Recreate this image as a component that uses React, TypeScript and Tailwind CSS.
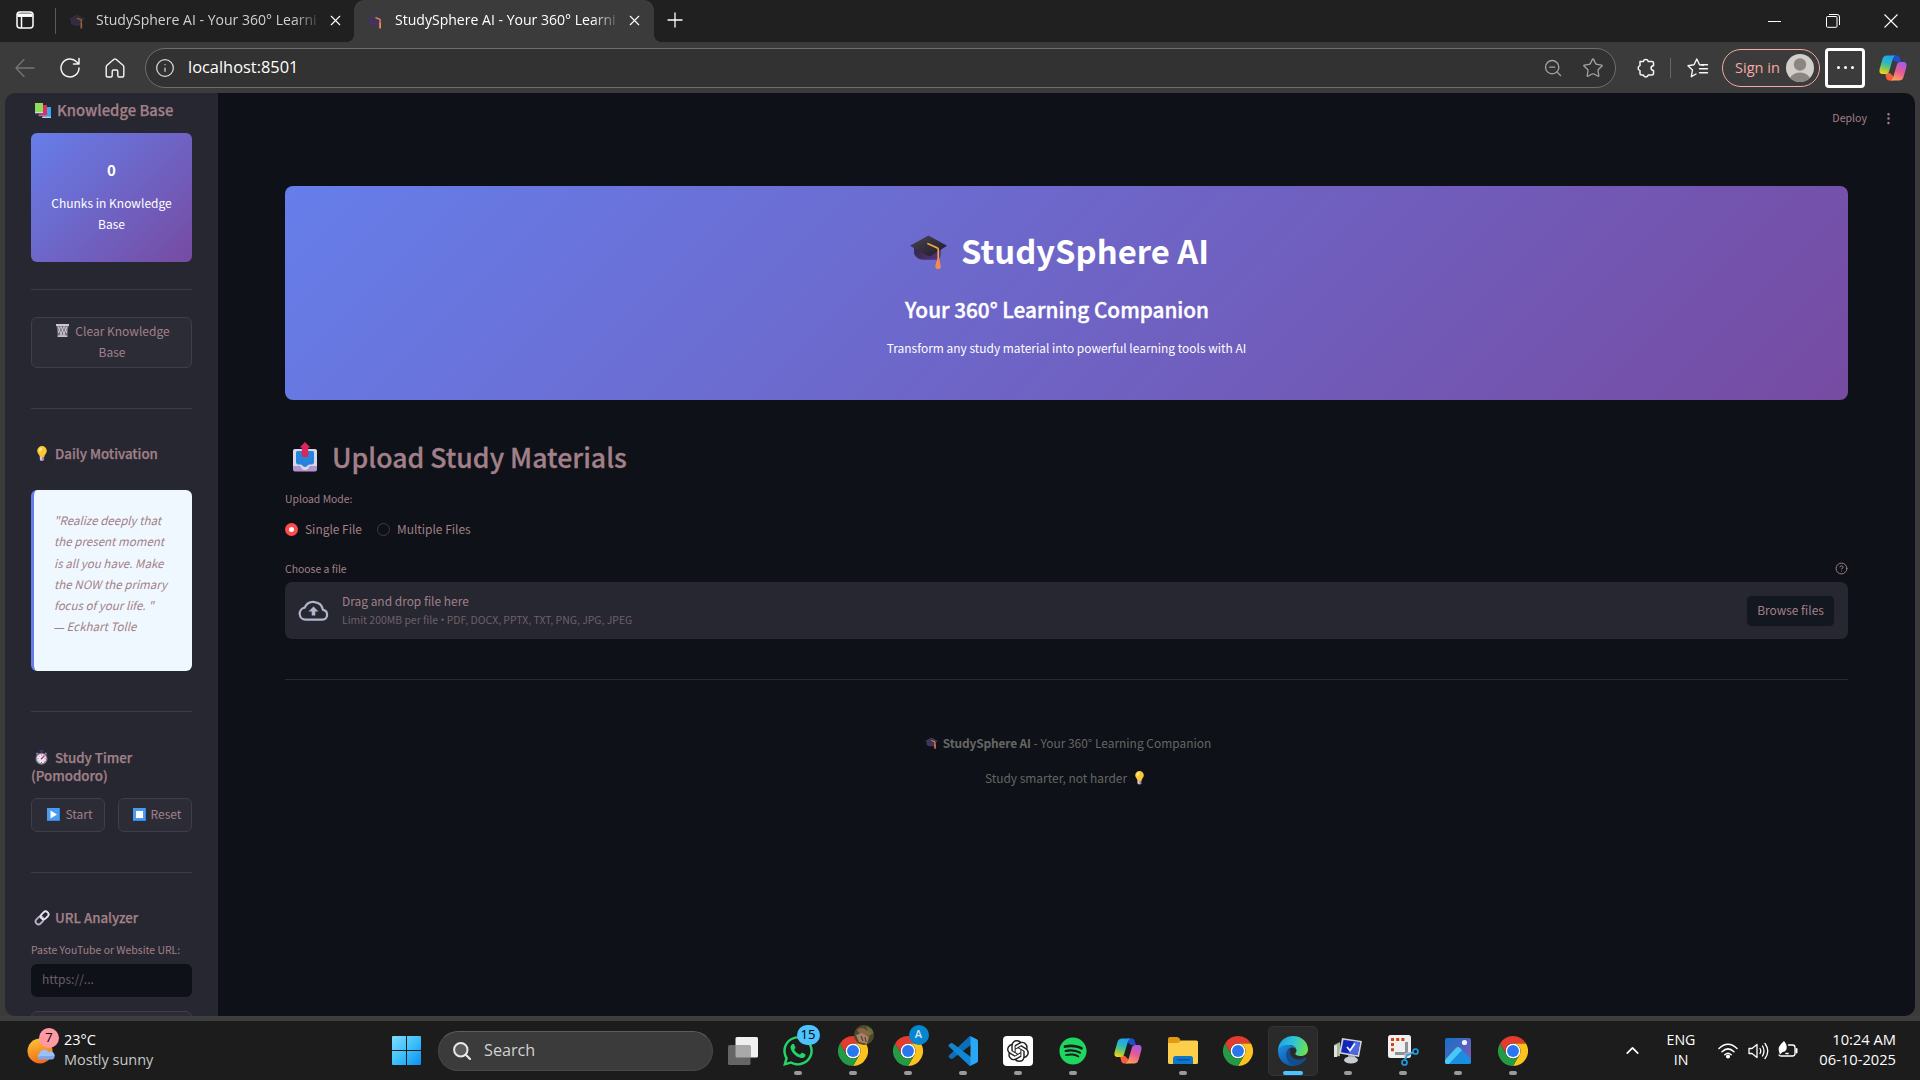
import React from 'react';
import { Info, Star, X, Plus, ZoomOut, MoreVertical, ChevronUp, CircleHelp } from 'lucide-react';
import { FaWhatsapp, FaSpotify } from 'react-icons/fa';
import { SiOpenai } from 'react-icons/si';

type IconProps = { className?: string };

/* ---------- emoji drawings ---------- */

const Cap = ({ className }: IconProps) => (
  <svg viewBox="0 0 36 34" className={className}>
    <defs>
      <linearGradient id="capTop" x1="0" y1="0" x2="1" y2="1">
        <stop offset="0" stopColor="#4a4552" />
        <stop offset="1" stopColor="#1f1a28" />
      </linearGradient>
      <linearGradient id="capBase" x1="0" y1="0" x2="1" y2="0.4">
        <stop offset="0" stopColor="#32273f" />
        <stop offset="1" stopColor="#52307c" />
      </linearGradient>
    </defs>
    <path d="M4 12V18Q6 24 13 24H28Q30 22 30 18V11Z" fill="url(#capBase)" />
    <path d="M18 0.5 36 10.5 21 20Q18.500 21.200 16 19.500L0 10.500Z" fill="url(#capTop)" />
    <path d="M17.500 8.500 26.500 12.500Q27.500 13 27.500 14.500V25" fill="none" stroke="#eda63a" strokeWidth="1.700" strokeLinecap="round" />
    <path d="M26.500 23H28.500L30 31Q29.500 33.500 27.500 33.500T24.500 31Z" fill="#f58a4c" />
  </svg>
);

const SmallCap = ({ className }: IconProps) => (
  <svg viewBox="0 0 16 15" className={className}>
    <path d="M2 5V9.500Q4 11.500 7 11.500H13V5Z" fill="#4b2f6c" />
    <path d="M8 .5 16 5 9.500 9.500H7.500L0 5Z" fill="#413450" />
    <path d="M8 4.300 12.300 6V10" fill="none" stroke="#e09a3c" strokeWidth="1.200" />
    <path d="M11.500 9.500H13.200V14.500H11.500Z" fill="#f58a4c" />
  </svg>
);

const Books = ({ className }: IconProps) => (
  <svg viewBox="0 0 16 15" className={className}>
    <path d="M8 4h8v10.800H8z" fill="#37a8ee" />
    <path d="M7 13.800h9v1H7z" fill="#d9e8f7" />
    <path d="M4 2h8v10H4z" fill="#e62a5c" />
    <path d="M3.500 12h8v1.200h-8z" fill="#b36aa0" />
    <path d="M0 0h8v10H0z" fill="#8fdc5c" />
    <path d="M0 8.900h8v1.400H0z" fill="#d5d3ea" />
    <path d="M0 10.300h8v.9H0z" fill="#4d6f70" />
  </svg>
);

const Trash = ({ className }: IconProps) => (
  <svg viewBox="0 0 13 13" className={className}>
    <path d="M.5 1h12L11.300 12.500H1.700Z" fill="#77727f" />
    <path d="M2 2.500 6 12M5 2.500 9 12M8.500 2.500 10.800 9M11 2.500 7 12M8 2.500 4 12M4.500 2.500 2.300 9" stroke="#d9d4e0" strokeWidth=".8" />
    <path d="M0 0h13v2H0z" fill="#cbc6d2" />
    <path d="M1.600 11.500h9.800V13H1.600z" fill="#c5c0cc" />
  </svg>
);

const Bulb = ({ className }: IconProps) => (
  <svg viewBox="0 0 10 15" className={className}>
    <path d="M5 0a4.800 4.800 0 0 1 4.800 4.800C9.800 7.500 7.500 8.500 7.200 11H2.800C2.500 8.500.2 7.500.2 4.800A4.800 4.800 0 0 1 5 0Z" fill="#fcc635" />
    <path d="M3.800 1.500Q1.800 2.200 1.700 4.500 2 6.500 3.500 5.500 5 4 5 2.500 4.800 1.300 3.800 1.500Z" fill="#ffe98c" />
    <path d="M2.900 11h4.200v2.500L6.200 15H3.800L2.900 13.500Z" fill="#9c86b5" />
    <path d="M2.900 11h2v3.500h-1L2.900 13.500Z" fill="#d8cbe4" />
  </svg>
);

const Stopwatch = ({ className }: IconProps) => (
  <svg viewBox="0 0 13 15" className={className}>
    <path d="M4.500 0h4v1.500h-4zM5.700 1h1.600v3H5.700z" fill="#54306f" />
    <path d="M.8 3.800 2.200 2.300 3.500 3.600 2 5ZM12.200 3.800 10.800 2.300 9.500 3.600 11 5Z" fill="#8b7e99" />
    <circle cx="6.500" cy="8.800" r="6" fill="#857a95" />
    <circle cx="6.500" cy="8.600" r="4.700" fill="#efe9f5" />
    <path d="M6.500 4.500v1M6.500 12v1M2.500 8.700h1M9.700 8.700h1M3.700 5.800l.7.7M3.700 11.500l.7-.7M9.300 11.500l-.7-.7" stroke="#6c6278" strokeWidth=".9" />
    <path d="M6 9.300 9.500 5.500" stroke="#d6246b" strokeWidth="1.300" />
  </svg>
);

const BlueKey = ({ className, children }: IconProps & { children: React.ReactNode }) => (
  <svg viewBox="0 0 13 13" className={className}>
    <path d="M0 0h13v13H0z" fill="#4a9cf0" />
    <path d="M0 12h13v1H0zM12 0h1v13h-1z" fill="#3a84dc" />
    {children}
  </svg>
);

const LinkEmoji = ({ className }: IconProps) => (
  <svg viewBox="0 0 16 16" className={className} fill="none" strokeWidth="1.900">
    <rect x="-4.300" y="-2.700" width="8.600" height="5.800" rx="2.900" transform="translate(5.400 10.300) rotate(-45)" stroke="#b6adc6" />
    <rect x="-4.300" y="-2.900" width="8.600" height="5.800" rx="2.900" transform="translate(10.600 5.400) rotate(-45)" stroke="#e8e4f0" />
  </svg>
);

const Outbox = ({ className }: IconProps) => (
  <svg viewBox="0 0 24 30" className={className}>
    <rect x="0" y="8" width="24" height="21.500" rx="2" fill="#b195cf" />
    <path d="M0 9Q0 7 2 7H22Q24 7 24 9V24H16.500Q15.500 28 12 28T7.500 24H0Z" fill="#dcd6ea" />
    <path d="M3 10.500Q3 9 4.500 9H19.500Q21 9 21 10.500V21L19.500 22.500H16.500Q14.500 22.500 14.300 24 12 26 9.700 24 9.500 22.500 7.500 22.500H4.500L3 21Z" fill="#2685db" />
    <path d="M12 0 17.500 5.500H15.200V14Q15.200 15 14.200 15H9.800Q8.800 15 8.800 14V5.500H6.500Z" fill="#d9275a" />
  </svg>
);

/* ---------- application logos ---------- */

const Chrome = ({ className }: IconProps) => (
  <svg viewBox="0 0 48 48" className={className}>
    <circle cx="24" cy="24" r="12" fill="#fff" />
    <path d="M24,12H44.7812a23.9939,23.9939,0,0,0-41.5639.0029L13.6079,30l.0093-.0024A11.9852,11.9852,0,0,1,24,12Z" fill="#e33b2e" />
    <path d="M34.3913,30.0029,24.0007,48A23.994,23.994,0,0,0,44.78,12.0031H23.9989l-.0025.0093A11.985,11.985,0,0,1,34.3913,30.0029Z" fill="#fcc31e" />
    <path d="M13.6086,30.0031,3.218,12.006A23.994,23.994,0,0,0,24.0025,48L34.3931,30.0029l-.0067-.0068a11.9852,11.9852,0,0,1-20.7778.007Z" fill="#249a45" />
    <circle cx="24" cy="24" r="9.500" fill="#2a76ee" />
  </svg>
);

const VsCode = ({ className }: IconProps) => (
  <svg viewBox="0 0 100 100" className={className}>
    <path d="M97 12 76 2Q72 0 69 3L3 65Q0 68 3 71L9 76Q12 78 15 76L95 16Z" fill="#0a6fb8" />
    <path d="M97 88 76 98Q72 100 69 97L3 35Q0 32 3 29L9 24Q12 22 15 24L95 84Z" fill="#1286d2" />
    <path d="M76 98Q72 100 69 97C73 100 75 97 75 93V7C75 3 73 0 69 3Q72 0 76 2L97 12Q100 14 100 17V83Q100 86 97 88Z" fill="#2aa7f5" />
  </svg>
);

const Copilot = ({ className }: IconProps) => (
  <svg viewBox="0 0 28 26" className={className}>
    <defs>
      <linearGradient id="cpA" x1="0.6" y1="0" x2="0.3" y2="1">
        <stop offset="0" stopColor="#1ba5f0" />
        <stop offset=".4" stopColor="#2db7c4" />
        <stop offset=".65" stopColor="#6cc766" />
        <stop offset="1" stopColor="#f5d217" />
      </linearGradient>
      <linearGradient id="cpB" x1="0.7" y1="0" x2="0.3" y2="1">
        <stop offset="0" stopColor="#a55be8" />
        <stop offset=".5" stopColor="#ea5a92" />
        <stop offset="1" stopColor="#fda35a" />
      </linearGradient>
    </defs>
    <path d="M14 .5H18C20 .5 20.500 2 21 4L22 7H17L12 3Z" fill="#1d4fd0" />
    <path d="M14 25.500H10C8 25.500 7.500 24 7 22L6 18H11L16 23Z" fill="#f5603a" />
    <path d="M8 .5H16.500C14.500 1 14 3 13.300 5.500L10.500 15C9.700 18 9 19 6.500 19H3.500C.5 19 0 16.500.8 13.500L3.300 4.500C4.200 1.500 5.500.5 8 .5Z" fill="url(#cpA)" />
    <path d="M20 25.500H11.500C13.500 25 14 23 14.700 20.500L17.500 11C18.300 8 19 7 21.500 7H24.500C27.500 7 28 9.500 27.200 12.500L24.700 21.500C23.800 24.500 22.500 25.500 20 25.500Z" fill="url(#cpB)" />
  </svg>
);

const Edge = ({ className }: IconProps) => (
  <svg viewBox="0 0 30 30" className={className}>
    <defs>
      <linearGradient id="edTop" x1="0" y1="0.3" x2="1" y2="0.5">
        <stop offset="0" stopColor="#1ea2e4" />
        <stop offset=".5" stopColor="#2fc3d8" />
        <stop offset="1" stopColor="#6fe24a" />
      </linearGradient>
      <linearGradient id="edLow" x1="0" y1="0" x2="0.6" y2="1">
        <stop offset="0" stopColor="#1c8fe0" />
        <stop offset="1" stopColor="#0c5aa8" />
      </linearGradient>
    </defs>
    <path d="M.1 13.500C.8 5.500 7 0 15 0 24 0 30 6.500 30 13.200 30 17.500 26.800 20 23 20 20 20 17.300 19 17.300 17.700 17.300 17 18.500 16.300 18.500 14.500 18.500 11.500 15.500 9 11.500 9 6 9 1.500 12 .1 16Z" fill="url(#edTop)" />
    <path d="M0 15C.5 11.500 5 9 9.500 9 14 9 18.500 11 18.500 14.500 18.500 12.500 16 11.500 14 11.500 10 11.500 8.500 15.500 8.500 18.500 8.500 24.500 13.500 29 18.500 29.500 17.500 30 16 30 15 30 6.500 30 0 23.500 0 15Z" fill="url(#edLow)" />
    <path d="M8.500 18.500C8.500 15.500 10.200 12.300 13.500 11.500 11.500 13 11.500 18 14 20.800 17.300 24.300 23 24.300 27.800 21.500Q28.700 21.200 28.400 22C26.500 26 22.500 29.300 18 29.600 12.500 29 8.500 24 8.500 18.500Z" fill="#134d8c" />
  </svg>
);

const Folder = ({ className }: IconProps) => (
  <svg viewBox="0 0 30 27" className={className}>
    <path d="M0 2Q0 0 2 0H9Q10.500 0 11.500 1.500L13 4V10H0Z" fill="#e09b10" />
    <path d="M0 6H10L13.500 3.500H28.500Q30 3.500 30 5V25.500Q30 27 28.500 27H1.500Q0 27 0 25.500Z" fill="#fccf4a" />
    <path d="M5 27V21.500Q5 19 7.500 19H22.500Q25 19 25 21.500V27Z" fill="#0f77c9" />
    <path d="M8.500 22.800H21.500" stroke="#064f93" strokeWidth="1.200" />
  </svg>
);

const Computer = ({ className }: IconProps) => (
  <svg viewBox="0 0 28 26" className={className}>
    <path d="M0 7 6 4V18L0 19Z" fill="#a9b59c" />
    <path d="M0 8 3 7V19L0 19Z" fill="#dfe3d8" />
    <path d="M14 16h7v6h-7z" fill="#8f949a" />
    <ellipse cx="17" cy="22" rx="7" ry="3.500" fill="#c9ccd0" />
    <path d="M8 0 28 3 25 19 5 15.500Z" fill="#cfd2d6" />
    <path d="M9.500 1.800 26 4.300 23.600 17 7 14.200Z" fill="#1226b8" />
    <path d="M20 3.400 26 4.300 23.600 17 14 15.400Z" fill="#4e68e0" />
    <path d="M13 9 16 12.500 21 5.500" fill="none" stroke="#fff" strokeWidth="1.600" />
  </svg>
);

const Snip = ({ className }: IconProps) => (
  <svg viewBox="0 0 31 31" className={className}>
    <rect width="23" height="23" rx="2.500" fill="#eef0f2" />
    <path d="M3 4.500H18M4.500 8V17" fill="none" stroke="#d8420f" strokeWidth="3" strokeDasharray="3 2.200" />
    <path d="M18.500 7V19M7 18.500H21" stroke="#8d9399" strokeWidth="3" fill="none" />
    <path d="M17.500 18V24M19 18H25" stroke="#b5bac0" strokeWidth="2" />
    <circle cx="16.500" cy="27.500" r="2.500" fill="none" stroke="#1f9be0" strokeWidth="1.700" />
    <circle cx="27.500" cy="16.500" r="2.500" fill="none" stroke="#1f9be0" strokeWidth="1.700" />
    <path d="M17 25 19 20.500 25 18" stroke="#1f9be0" strokeWidth="1.500" fill="none" />
  </svg>
);

const Photos = ({ className }: IconProps) => (
  <svg viewBox="0 0 26 26" className={className}>
    <defs>
      <linearGradient id="phSky" x1="0" y1="0" x2="1" y2="0.8">
        <stop offset="0" stopColor="#1072c8" />
        <stop offset="1" stopColor="#7b58b8" />
      </linearGradient>
    </defs>
    <rect width="26" height="26" rx="2" fill="url(#phSky)" />
    <path d="M0 22 11 10Q13 8 15 10L26 21V24Q26 26 24 26H2Q0 26 0 24Z" fill="#1b8de0" />
    <path d="M0 22 11 10Q13 8 15 10L17 12 4 26H2Q0 26 0 24Z" fill="#49c8f5" />
    <circle cx="19.500" cy="4.500" r="2.600" fill="#f2f2fa" />
  </svg>
);

const Weather = ({ className }: IconProps) => (
  <svg viewBox="0 0 28 26" className={className}>
    <defs>
      <linearGradient id="sun" x1="0.3" y1="0" x2="0.6" y2="1">
        <stop offset="0" stopColor="#fac233" />
        <stop offset="1" stopColor="#f0671a" />
      </linearGradient>
    </defs>
    <circle cx="13" cy="13" r="12.500" fill="url(#sun)" />
    <path d="M13 21a3 3 0 0 1-.5-5.500 5 5 0 0 1 9-1.500 4 4 0 0 1 4 7Z" fill="#9ac0f5" />
    <path d="M11 20.500Q11 18 14 18H27Q28 21 25 21.500H13Q11 21.500 11 20.500Z" fill="#7da7ea" />
  </svg>
);

/* ---------- browser chrome ---------- */

const TabTitle = ({ active }: { active?: boolean }) => (
  <div className={`w-[224px] shrink-0 whitespace-nowrap pb-[2px] text-[14.050px] [mask-image:linear-gradient(to_right,black_88%,transparent_101%)] ${active ? 'text-white' : 'text-[#d0d0d0]'}`}>
    StudySphere AI - Your 360° Learni
  </div>
);

const TabBar = () => (
  <div className="flex h-[42px] items-stretch bg-[#202020]">
    <div className="flex w-[354px] items-center pl-4">
      <svg viewBox="0 0 18 18" className="-mt-[2px] size-[18px]" fill="none" stroke="#fff" strokeWidth="1.500">
        <rect x="1" y="1" width="16" height="16" rx="3" />
        <path d="M1.500 4.200H16.500" strokeWidth="3.500" />
        <path d="M5.500 5V17" />
      </svg>
      <div className="ml-[21px] h-[26px] w-px bg-[#5a5a5a]" />
      <SmallCap className="ml-[13px] mr-[11px] w-4 opacity-60" />
      <TabTitle />
      <X className="-mt-px ml-[7px] size-[17px] text-white" strokeWidth={1.600} />
    </div>
    <div className="relative flex w-[300px] items-center rounded-t-[10px] bg-[#3b3b3b] pl-[13px]">
      <SmallCap className="mr-[11px] w-[17px]" />
      <TabTitle active />
      <X className="-mt-px ml-[7px] size-[17px] text-white" strokeWidth={1.600} />
      <div className="absolute -left-2 bottom-0 size-2 bg-[radial-gradient(circle_at_0_0,#202020_8px,#3b3b3b_8px)]" />
      <div className="absolute -right-2 bottom-0 size-2 bg-[radial-gradient(circle_at_100%_0,#202020_8px,#3b3b3b_8px)]" />
    </div>
    <div className="flex flex-1 items-center pb-[2px] pl-[9px]">
      <Plus className="size-6 text-white" strokeWidth={1.300} />
    </div>
    <div className="flex items-center pr-[22px]">
      <div className="h-px w-[13px] bg-white" />
      <svg viewBox="0 0 14 14" className="ml-[45px] size-[14px]" fill="none" stroke="#fff">
        <rect x=".5" y="2.500" width="10.500" height="10.800" rx="1" />
        <path d="M3 .5H11Q13.500 .5 13.500 3V11" />
      </svg>
      <svg viewBox="0 0 14 14" className="ml-[44px] size-[14px]" stroke="#fff" strokeWidth="1.100">
        <path d="M.5.5 13.500 13.500M13.500.5.5 13.500" />
      </svg>
    </div>
  </div>
);

const Toolbar = () => (
  <div className="flex h-[51px] items-center bg-[#3b3b3b]">
    <svg viewBox="0 0 20 20" className="ml-[15px] size-5" fill="none" stroke="#757575" strokeWidth="1.300" strokeLinecap="round" strokeLinejoin="round">
      <path d="M19 10H1M9 1.500 1 10 9 18.500" />
    </svg>
    <svg viewBox="0 0 22 22" className="ml-6 size-[22px]" fill="none" stroke="#f5f5f5" strokeWidth="1.500" strokeLinecap="round" strokeLinejoin="round">
      <path d="M20 11A9 9 0 1 1 17.500 4.700L20 7M20 1.500V7H14.500" />
    </svg>
    <svg viewBox="0 0 20 20" className="ml-6 size-5" fill="none" stroke="#f5f5f5" strokeWidth="1.400" strokeLinejoin="round">
      <path d="M1.200 9Q1.200 8 2 7.300L9 1.300Q10 .6 11 1.300L18 7.300Q18.800 8 18.800 9V17.500Q18.800 19 17.500 19H14Q12.800 19 12.800 17.500V13.500Q12.800 12 11.500 12H8.500Q7.200 12 7.200 13.500V17.500Q7.200 19 6 19H2.500Q1.200 19 1.200 17.500Z" />
    </svg>
    <div className="ml-5 flex h-10 w-[1471px] items-center rounded-full border border-[#6e6e6e] bg-[#323232] pl-[9px] pr-[11px]">
      <Info className="size-5 text-[#d8d8d8]" strokeWidth={1.500} />
      <span className="ml-[13px] flex-1 text-[16.400px] leading-none text-white">localhost:8501</span>
      <ZoomOut className="size-5 text-[#a3a3a3]" strokeWidth={1.600} />
      <Star className="ml-[19px] size-[22px] text-[#a3a3a3]" strokeWidth={1.400} />
    </div>
    <svg viewBox="0 0 19 20" className="ml-5 h-5 w-[19px]" fill="none" stroke="#f5f5f5" strokeWidth="1.500" strokeLinejoin="round">
      <path d="M4 3.500H7.300A2.600 2.600 0 0 1 12.300 3.500H16Q17.500 3.500 17.500 5V7.700A2.400 2.400 0 0 0 17.500 12.500V15.500Q17.500 17 16 17H12.300A2.600 2.600 0 0 1 7.300 17H5.500Q4 17 4 15.500V12.600A2.600 2.600 0 0 1 4 7.600Z" />
    </svg>
    <div className="ml-[15px] h-5 w-px bg-[#666]" />
    <svg viewBox="0 0 22 20" className="ml-4 h-5 w-[22px]" fill="none" stroke="#f5f5f5" strokeWidth="1.400" strokeLinejoin="round" strokeLinecap="round">
      <path d="M16.500 7.200 12.500 6.800 9.800 1 7 6.800 1 7.700 5.500 12 4.300 18.700 9 16M14 6.700H20.500M12.500 10.700H20.500M12.500 14.700H20.500" />
    </svg>
    <div className="ml-[13px] flex h-[38px] w-[98px] items-center rounded-full border border-[#f4aaa5] pl-3">
      <span className="text-[14.600px] text-[#f4aaa5]">Sign in</span>
      <svg viewBox="0 0 28 28" className="ml-[6px] size-7">
        <clipPath id="av"><circle cx="14" cy="14" r="14" /></clipPath>
        <g clipPath="url(#av)">
          <path d="M0 0h28v28H0z" fill="#d2cfcb" />
          <circle cx="14" cy="10.500" r="6.200" fill="#8b8682" />
          <ellipse cx="14" cy="25" rx="9.800" ry="6.500" fill="#8b8682" />
        </g>
      </svg>
    </div>
    <div className="ml-[5px] flex size-10 items-center justify-center gap-1 rounded-[4px] border-[3px] border-white">
      <i className="size-[3px] rounded-full bg-white" />
      <i className="size-[3px] rounded-full bg-white" />
      <i className="size-[3px] rounded-full bg-white" />
    </div>
    <Copilot className="ml-[14px] w-7" />
  </div>
);

/* ---------- sidebar ---------- */

const Rule = () => <div className="h-px shrink-0 bg-[#3f3b45]" />;

const Sidebar = () => (
  <aside className="flex w-[213px] shrink-0 flex-col bg-[#262730] px-[26px]">
    <h4 className="mt-[7px] flex h-5 items-center whitespace-nowrap text-[14.800px] font-medium [-webkit-text-stroke:0.25px_currentColor]">
      <Books className="ml-1 mr-[6px] w-4" />
      Knowledge Base
    </h4>
    <div className="mt-[13px] flex h-[129px] shrink-0 flex-col items-center rounded-[6px] bg-[linear-gradient(135deg,#667eea_0%,#764ba2_100%)] text-center text-white">
      <span className="mt-[27px] text-[15px] font-bold leading-5">0</span>
      <span className="mt-[12px] w-[130px] text-[12px] leading-[21px]">Chunks in Knowledge Base</span>
    </div>
    <div className="mt-[27px]"><Rule /></div>
    <div className="mt-[27px] flex h-[51px] shrink-0 flex-col items-center rounded-[6px] border border-[#3f3e49] bg-[#2b2c36] pt-[2px] text-[12px] leading-[21px]">
      <span className="ml-[3px] flex items-center"><Trash className="mr-[6px] size-[13px]" />Clear Knowledge</span>
      <span className="ml-px">Base</span>
    </div>
    <div className="mt-[40px]"><Rule /></div>
    <h5 className="mt-[35px] flex h-5 items-center whitespace-nowrap text-[13.300px] font-medium [-webkit-text-stroke:0.25px_currentColor]">
      <Bulb className="ml-[6px] mr-[8px] w-[10px]" />
      Daily Motivation
    </h5>
    <div className="mt-[26px] h-[181px] shrink-0 whitespace-nowrap rounded-[6px] border-l-[3px] border-[#667eea] bg-[#f0f8ff] pl-5 pt-5 text-[11.550px] italic leading-[21.300px]">
      "Realize deeply that<br />the present moment<br />is all you have. Make<br />the NOW the primary<br />focus of your life. "<br />
      <span className="mr-[2px] font-['Open_Sans'] text-[11px] leading-none">—</span>Eckhart Tolle
    </div>
    <div className="mt-[40px]"><Rule /></div>
    <h5 className="mt-[37px] text-[13.300px] font-medium leading-[18px] [-webkit-text-stroke:0.25px_currentColor]">
      <span className="flex items-center"><Stopwatch className="ml-1 mr-[7px] w-[13px]" />Study Timer</span>
      <span className="block">(Pomodoro)</span>
    </h5>
    <div className="mt-[13px] flex h-[34px] shrink-0 gap-[13px] text-[12px]">
      <div className="flex flex-1 items-center justify-center rounded-[6px] border border-[#3f3e49] bg-[#2b2c36] pb-px pl-1">
        <BlueKey className="mr-[5px] size-[13px]"><path d="M3.500 2.500 10 6.500 3.500 10.500Z" fill="#fff" /></BlueKey>
        Start
      </div>
      <div className="flex flex-1 items-center justify-center rounded-[6px] border border-[#3f3e49] bg-[#2b2c36] pb-px pl-1">
        <BlueKey className="mr-[5px] size-[13px]"><path d="M3 3H10V10H3Z" fill="#fff" /></BlueKey>
        Reset
      </div>
    </div>
    <div className="mt-[40px]"><Rule /></div>
    <h5 className="mt-[35px] flex h-5 items-center whitespace-nowrap text-[13.300px] font-medium [-webkit-text-stroke:0.25px_currentColor]">
      <LinkEmoji className="ml-[3px] mr-[5px] w-4" />
      URL Analyzer
    </h5>
    <div className="mt-[14px] h-4 whitespace-nowrap text-[10.450px] leading-4">Paste YouTube or Website URL:</div>
    <div className="mt-[6px] flex h-[33px] shrink-0 items-center rounded-[6px] bg-[#0e1117] pb-[2px] pl-[11px] text-[12px] text-[#6d5b66]">https://...</div>
    <div className="mt-[14px] h-[34px] shrink-0 rounded-[6px] border border-[#3f3e49] bg-[#2b2c36]" />
  </aside>
);

/* ---------- main column ---------- */

const Main = () => (
  <main className="flex flex-1 flex-col bg-[#0e1117]">
    <div className="flex h-[50px] items-center justify-end pr-[19px] text-[10.600px]">
      Deploy
      <MoreVertical className="ml-[14px] size-[15px]" />
    </div>
    <div className="flex flex-col pl-[67px] pr-[67px] pt-[43px]">
      <section className="flex h-[214px] flex-col items-center rounded-[8px] bg-[linear-gradient(135deg,#667eea_0%,#764ba2_100%)] text-white">
        <h1 className="mr-[14px] mt-[38px] flex h-[52px] items-center text-[32.800px] font-bold">
          <Cap className="mr-[14px] mt-[4px] w-[37px]" />
          StudySphere AI
        </h1>
        <h3 className="mr-[19px] mt-[20px] flex h-7 items-center text-[20.750px] font-medium [-webkit-text-stroke:0.4px_currentColor]">Your 360° Learning Companion</h3>
        <p className="mt-[14px] flex h-5 items-center text-[11.950px]">Transform any study material into powerful learning tools with AI</p>
      </section>
      <h2 className="mt-[37px] flex h-10 items-center text-[26.650px] font-medium [-webkit-text-stroke:0.300px_currentColor]">
        <Outbox className="ml-2 mr-[15px] w-6" />
        Upload Study Materials
      </h2>
      <div className="mt-[14px] flex h-4 items-center text-[10.400px]">Upload Mode:</div>
      <div className="mt-[12px] flex h-5 items-center text-[11.950px]">
        <span className="flex size-[13px] items-center justify-center rounded-full bg-[#ff4b4b]"><i className="size-[5px] rounded-full bg-white" /></span>
        <span className="ml-[7px]">Single File</span>
        <span className="ml-[15px] size-[13px] rounded-full border border-[#403b45]" />
        <span className="ml-[7px]">Multiple Files</span>
      </div>
      <div className="mt-[22px] flex h-4 items-center justify-between text-[10.400px]">
        Choose a file
        <CircleHelp className="-mt-px size-[13px]" strokeWidth={1.800} />
      </div>
      <div className="mt-[5px] flex h-[57px] items-center rounded-[7px] bg-[#262730] pl-[13px] pr-[13px]">
        <svg viewBox="0 0 31 21" className="-mt-px w-[31px]" fill="none" stroke="#b0b5c9" strokeWidth="2.200" strokeLinejoin="round">
          <path d="M7.500 19.700H24.500A5 5 0 0 0 25 9.800 9.700 9.700 0 0 0 6.700 7.600 6.100 6.100 0 0 0 7.500 19.700Z" />
          <path d="M15.500 15.500V10" strokeWidth="3.600" />
          <path d="M10.500 11.500 15.500 6.500 20.500 11.500Z" fill="#b0b5c9" stroke="none" />
        </svg>
        <div className="ml-[13px] flex-1">
          <div className="-mt-px text-[11.950px] leading-[19px]">Drag and drop file here</div>
          <div className="flex h-5 items-center whitespace-pre text-[10.450px] text-[#705f6b]">
            Limit 200MB per file <span className="pt-[2px] font-['Open_Sans']">•</span> PDF, DOCX, PPTX, TXT, PNG, JPG, JPEG
          </div>
        </div>
        <div className="flex h-8 w-[89px] items-center justify-center rounded-[6px] border border-[#24252e] bg-[#131720] pb-[2px] text-[11.950px]">Browse files</div>
      </div>
      <div className="mt-[40px] h-px bg-[#2a2b2f]" />
      <div className="mt-[53px] flex h-5 items-center justify-center whitespace-pre pl-[3px] text-[11.950px] text-[#666]">
        <SmallCap className="mr-[5px] w-[13px]" />
        <b className="tracking-[-0.150px]">StudySphere AI</b> - Your 360° Learning Companion
      </div>
      <div className="mt-[15px] flex h-5 items-center justify-center text-[11.950px] text-[#666]">
        Study smarter, not harder
        <Bulb className="ml-[8px] mr-[4px] w-[9px]" />
      </div>
    </div>
  </main>
);

/* ---------- taskbar ---------- */

const Slot = ({ children, run, active }: { children: React.ReactNode; run?: boolean; active?: boolean }) => (
  <div className="flex w-[55px] justify-center">
    <div className={`relative flex size-[50px] items-center justify-center rounded-[5px] ${active ? 'border border-[#333] bg-[#2a2a2a]' : ''}`}>
      {children}
      {run && <i className="absolute bottom-[1px] left-[21px] h-1 w-2 rounded-full bg-[#9a9a9a]" />}
      {active && <i className="absolute bottom-0 left-[14px] h-1 w-5 rounded-full bg-[#4cc2ff]" />}
    </div>
  </div>
);

const Taskbar = () => (
  <div className="flex h-[59px] items-center bg-[#1c1c1c] text-white">
    <div className="relative ml-[27px]">
      <Weather className="w-7" />
      <span className="absolute -top-[10px] left-3 flex size-5 items-center justify-center rounded-full bg-[#ff99a4] text-[13px] text-black">7</span>
    </div>
    <div className="ml-[9px] w-[328px] pb-[2px] text-[14.500px] leading-5">
      <div>23°C</div>
      <div className="text-[#c8c8c8]">Mostly sunny</div>
    </div>
    <svg viewBox="0 0 29 29" className="size-[29px]">
      <defs>
        <linearGradient id="win" x1="0" y1="0" x2="29" y2="29" gradientUnits="userSpaceOnUse">
          <stop offset="0" stopColor="#7fdcfb" />
          <stop offset=".5" stopColor="#3fc0fa" />
          <stop offset="1" stopColor="#0a8ff2" />
        </linearGradient>
      </defs>
      <path d="M1 0H14V14H0V1Q0 0 1 0ZM15 0H28Q29 0 29 1V14H15ZM0 15H14V29H1Q0 29 0 28ZM15 15H29V28Q29 29 28 29H15Z" fill="url(#win)" />
    </svg>
    <div className="ml-[17px] flex h-10 w-[275px] items-center rounded-full border border-[#484848] border-t-[#5d5d5d] bg-[#3b3b3b] pl-[14px]">
      <svg viewBox="0 0 18 18" className="size-[18px]" fill="none" stroke="#e8e8e8" strokeWidth="2" strokeLinecap="round">
        <circle cx="7.800" cy="7.800" r="6.700" fill="#5b5b5b" />
        <path d="M12.800 12.800 17 17" strokeWidth="2.300" />
      </svg>
      <span className="ml-[13px] text-[16.200px] text-[#d2d2d2]">Search</span>
    </div>
    <div className="ml-[2px] flex">
      <Slot>
        <svg viewBox="0 0 30 28" className="w-[30px]">
          <rect x="7.500" y="0" width="22.500" height="20.500" rx="1.500" fill="#f0f0f0" />
          <rect x="0" y="8" width="22.500" height="20" rx="1.500" fill="#656565" />
          <path d="M7.500 8H21Q22.500 8 22.500 9.500V20.500H9Q7.500 20.500 7.500 19Z" fill="#a9a9a9" />
        </svg>
      </Slot>
      <Slot run>
        <FaWhatsapp className="size-[34px] text-[#25d366]" />
        <span className="absolute -top-px left-[24px] flex h-5 w-[23px] items-center justify-center rounded-full bg-[#4cc2ff] text-[13px] text-black">15</span>
      </Slot>
      <Slot run>
        <Chrome className="size-[30px]" />
        <svg viewBox="0 0 20 20" className="absolute left-[26px] -top-px size-5">
          <clipPath id="ph"><circle cx="10" cy="10" r="10" /></clipPath>
          <g clipPath="url(#ph)">
            <path d="M0 0h20v20H0z" fill="#4c4a28" />
            <path d="M3 5Q8 1 12 5L19 8 15 11 6 9Z" fill="#8a6647" />
            <path d="M2 10 8 8 15 12 13 19 5 17Z" fill="#a98069" />
            <path d="M12 1 18 4 20 9 14 7Z" fill="#5f7038" />
            <path d="M7 11 9 16M11 12 12 17" stroke="#5b3b2c" strokeWidth="1.200" />
          </g>
        </svg>
      </Slot>
      <Slot run>
        <Chrome className="size-[30px]" />
        <span className="absolute left-[26px] -top-px flex size-5 items-center justify-center rounded-full bg-[#0785cf] text-[11px] font-semibold text-[#cfe8f7]">A</span>
      </Slot>
      <Slot run><VsCode className="size-[30px]" /></Slot>
      <Slot run>
        <span className="flex size-[30px] items-center justify-center rounded-[4px] bg-white"><SiOpenai className="size-[22px] text-[#222]" /></span>
      </Slot>
      <Slot run><FaSpotify className="size-[28px] text-[#1ed760]" /></Slot>
      <Slot><Copilot className="w-7" /></Slot>
      <Slot run><Folder className="w-[30px]" /></Slot>
      <Slot><Chrome className="size-[30px]" /></Slot>
      <Slot active><Edge className="size-[30px]" /></Slot>
      <Slot run><Computer className="w-7" /></Slot>
      <Slot run><Snip className="ml-[1px] size-[31px]" /></Slot>
      <Slot run><Photos className="size-[26px]" /></Slot>
      <Slot run><Chrome className="size-[30px]" /></Slot>
    </div>
    <div className="ml-auto flex items-center pr-6">
      <ChevronUp className="size-[21px]" strokeWidth={2} />
      <div className="ml-[22px] w-[32px] pb-[2px] text-center text-[14.200px] leading-5">ENG<br />IN</div>
      <svg viewBox="0 0 20 16" className="ml-[21px] w-5" fill="none" stroke="#fff" strokeWidth="1.500" strokeLinecap="round">
        <path d="M1 5.500Q10-3 19 5.500" />
        <path d="M4 8.800Q10 3 16 8.800" />
        <path d="M6.800 11.700Q10 8.700 13.200 11.700" />
        <circle cx="10" cy="13.500" r="1.300" fill="#fff" />
      </svg>
      <svg viewBox="0 0 21 18" className="ml-[10px] w-[21px]" fill="none" stroke="#fff" strokeWidth="1.300" strokeLinecap="round" strokeLinejoin="round">
        <path d="M1 6.500H4L9 2.500V15.500L4 11.500H1Z" />
        <path d="M12 6.500Q13.500 9 12 11.500M14.500 4Q17.500 9 14.500 14M17 1.500Q22.500 9 17 16.500" />
      </svg>
      <svg viewBox="0 0 20 17" className="-mt-[2px] ml-[9px] w-5" fill="none" stroke="#fff" strokeWidth="1.300" strokeLinecap="round">
        <path d="M10.500 4H14.500Q17 4 17 6.500V12.500Q17 15 14.500 15H3Q1.500 15 1 14" />
        <path d="M18.500 8V11.500" strokeWidth="2" />
        <path d="M6 0Q9.500 4 8.500 8 7.500 11 4.500 11L2 13.500Q0 9 1 6 2.500 3 6 0Z" fill="#fff" stroke="none" />
        <path d="M8 12.500H10" strokeWidth="1.600" />
      </svg>
      <div className="ml-[19px] w-[79px] pb-[3px] text-right text-[14.700px] leading-5">10:24 AM<br />06-10-2025</div>
    </div>
  </div>
);

export default function App() {
  return (
    <div className="flex h-[1080px] w-[1920px] flex-col overflow-hidden bg-[#3b3b3b] font-['Open_Sans',sans-serif]">
      <TabBar />
      <Toolbar />
      <div className="mx-[5px] flex h-[923px] shrink-0 overflow-hidden rounded-[10px] font-['Noto_Sans_CJK_SC',sans-serif] text-[#a28089]">
        <Sidebar />
        <Main />
      </div>
      <div className="h-[5px] shrink-0 bg-[#3e3e3e]" />
      <Taskbar />
    </div>
  );
}
